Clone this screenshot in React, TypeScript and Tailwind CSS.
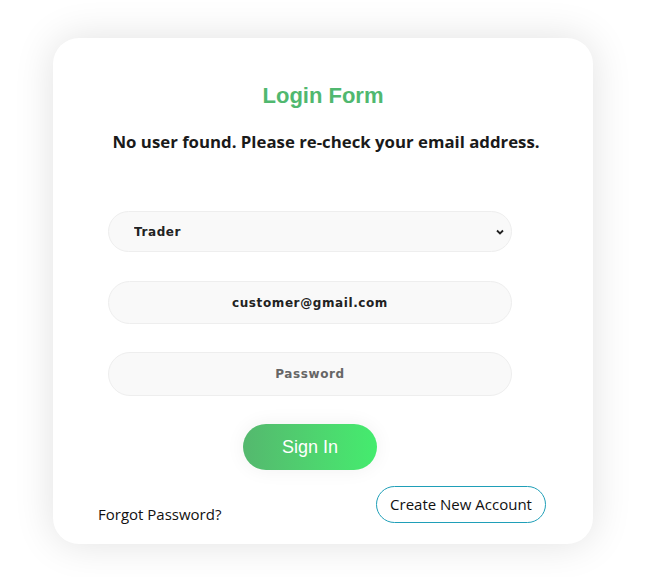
export default function App() {
  return (
    <div className="min-h-[577px] w-[645px] bg-white pt-[38px] pl-[53px]">
      {/* Card */}
      <div className="w-[540px] h-[506px] rounded-[26px] bg-white shadow-[0_0_40px_rgba(0,0,0,0.12)] flex flex-col items-center pt-[45px]">
        <h1 className="text-[22px] leading-[26px] font-bold text-[#50b86f] font-['Liberation_Sans',sans-serif]">
          Login Form
        </h1>
        <p className="mt-[22px] ml-[6px] text-[16.8px] leading-[22px] font-bold text-[#1a1a1a] font-['Open_Sans',sans-serif]">
          No user found. Please re-check your email address.
        </p>

        <form className="mt-[58px] self-start ml-[55px] w-[404px] flex flex-col">
          <div className="relative">
            <select
              defaultValue="Trader"
              className="appearance-none w-full h-[41px] rounded-full bg-[#f9f9f9] border border-[#eeeeee] pl-[25px] text-[12px] font-bold tracking-[0.6px] text-[#222] font-['DejaVu_Sans',sans-serif] outline-none"
            >
              <option>Trader</option>
              <option>Customer</option>
            </select>
            <svg
              className="absolute right-[7px] top-[16px] pointer-events-none"
              width="10"
              height="10"
              viewBox="0 0 10 10"
            >
              <path d="M2 3.5 L5 6.5 L8 3.5" stroke="#222" strokeWidth="1.8" fill="none" />
            </svg>
          </div>
          <input
            type="email"
            defaultValue="customer@gmail.com"
            className="mt-[29px] w-full h-[43px] rounded-full bg-[#f9f9f9] border border-[#eeeeee] text-center text-[12px] font-bold tracking-[0.6px] text-[#222] font-['DejaVu_Sans',sans-serif] outline-none"
          />
          <input
            type="password"
            placeholder="Password"
            className="mt-[28px] w-full h-[44px] rounded-full bg-[#f9f9f9] border border-[#eeeeee] text-center text-[12px] font-bold tracking-[0.6px] text-[#222] placeholder:text-[#666] font-['DejaVu_Sans',sans-serif] outline-none"
          />
          <button
            type="button"
            className="mt-[28px] self-center w-[134px] h-[46px] rounded-full bg-gradient-to-r from-[#54b86e] to-[#44ec6e] text-white text-[18px] font-['Liberation_Sans',sans-serif] shadow-[0_0_20px_rgba(0,0,0,0.06)]"
          >
            Sign In
          </button>
        </form>

        <div className="w-full mt-[16px] pl-[45px] pr-[47px] flex justify-between items-start">
          <a href="#" className="mt-[17px] text-[15px] text-[#111] font-['Open_Sans',sans-serif]">
            Forgot Password?
          </a>
          <button
            type="button"
            className="h-[37px] w-[170px] rounded-full border border-[#1f9fb8] bg-white text-[15px] text-[#111] font-['Open_Sans',sans-serif]"
          >
            Create New Account
          </button>
        </div>
      </div>
    </div>
  );
}
